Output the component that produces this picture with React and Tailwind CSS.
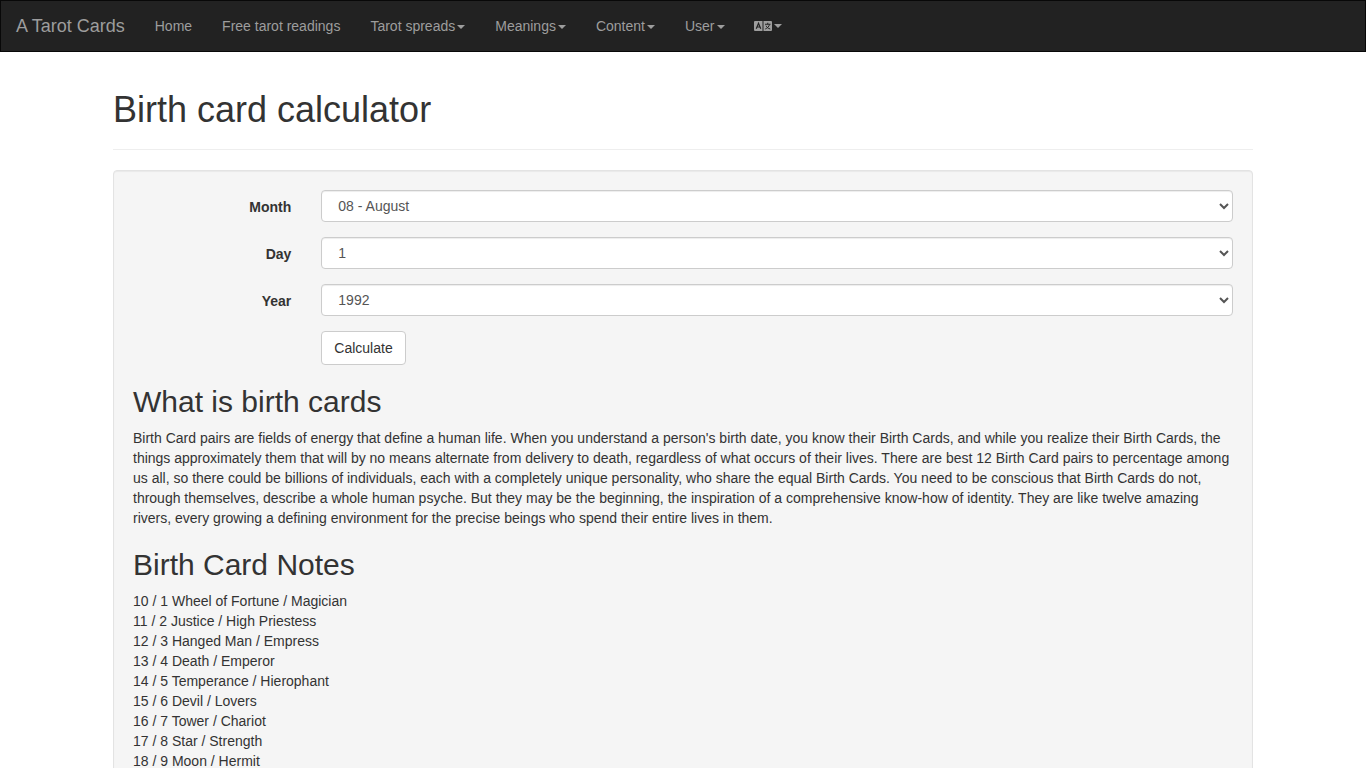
import React, { useState } from 'react';

const menu = [
  { label: 'Home' },
  { label: 'Free tarot readings' },
  { label: 'Tarot spreads', dropdown: true },
  { label: 'Meanings', dropdown: true },
  { label: 'Content', dropdown: true },
  { label: 'User', dropdown: true },
];

const months = [
  '01 - January', '02 - February', '03 - March', '04 - April', '05 - May', '06 - June',
  '07 - July', '08 - August', '09 - September', '10 - October', '11 - November', '12 - December',
];
const days = Array.from({ length: 31 }, (_, i) => String(i + 1));
const years = Array.from({ length: 100 }, (_, i) => String(1925 + i));

const notes = [
  '10 / 1 Wheel of Fortune / Magician',
  '11 / 2 Justice / High Priestess',
  '12 / 3 Hanged Man / Empress',
  '13 / 4 Death / Emperor',
  '14 / 5 Temperance / Hierophant',
  '15 / 6 Devil / Lovers',
  '16 / 7 Tower / Chariot',
  '17 / 8 Star / Strength',
  '18 / 9 Moon / Hermit',
];

function Caret() {
  return (
    <span className="ml-[2px] inline-block border-x-4 border-t-4 border-x-transparent border-t-[#9d9d9d] align-middle" />
  );
}

function LanguageIcon() {
  return (
    <svg viewBox="0 0 36 20" className="h-[10px] w-[18px]" fill="none" aria-hidden="true">
      <path d="M2 0h15v20H2a2 2 0 0 1-2-2V2a2 2 0 0 1 2-2zM19 0h15a2 2 0 0 1 2 2v16a2 2 0 0 1-2 2H19z" fill="#9d9d9d" />
      <path d="M4.500 15.500 9 4.500l4.500 11M6.500 12h5" stroke="#222" strokeWidth="2.400" />
      <path d="M22 6.500h11M27.500 3.500v3M31 7c-1 4-4 7-8.500 9M24 9.500c1.500 3 4.500 5.500 8.500 6.500" stroke="#222" strokeWidth="2" />
    </svg>
  );
}

function Navbar() {
  return (
    <nav className="flex flex-wrap border border-[#080808] bg-[#222] text-[#9d9d9d]">
      <a href="#" className="p-[15px] text-[18px] leading-[20px] hover:text-white">A Tarot Cards</a>
      <ul className="flex flex-wrap">
        {menu.map((item) => (
          <li key={item.label}>
            <a href="#" className="block p-[15px] hover:text-white">
              {item.label}
              {item.dropdown && <Caret />}
            </a>
          </li>
        ))}
        <li>
          <a href="#" aria-label="Language" className="flex items-center py-[15px] px-[14px] hover:text-white">
            <span className="flex h-5 items-center">
              <LanguageIcon />
              <Caret />
            </span>
          </a>
        </li>
      </ul>
    </nav>
  );
}

function SelectRow({ id, label, options, value, onChange }) {
  return (
    <div className="-mx-[15px] mb-[15px] grid grid-cols-6">
      <label htmlFor={id} className="px-[15px] pt-[7px] text-right font-bold">{label}</label>
      <div className="col-span-5 px-[15px]">
        <select
          id={id}
          value={value}
          onChange={(e) => onChange(e.target.value)}
          className="block h-8 w-full rounded-[4px] border border-[#ccc] bg-white pr-[13px] pl-3 text-[#555] shadow-[inset_0_1px_1px_rgba(0,0,0,0.075)]"
        >
          {options.map((o) => <option key={o}>{o}</option>)}
        </select>
      </div>
    </div>
  );
}

export default function App() {
  const [month, setMonth] = useState('08 - August');
  const [day, setDay] = useState('1');
  const [year, setYear] = useState('1992');

  return (
    <div className="bg-white font-['Liberation_Sans',Arial,sans-serif] text-[14px] leading-[20px] text-[#333]">
      <Navbar />
      <main className="mx-auto max-w-[1170px] px-[15px]">
        <header className="mt-[38px] mb-5 border-b border-[#eee] pb-[19px]">
          <h1 className="text-[36px] leading-[40px]">Birth card calculator</h1>
        </header>

        <div className="mb-5 rounded-[4px] border border-[#e3e3e3] bg-[#f5f5f5] p-[19px] shadow-[inset_0_1px_1px_rgba(0,0,0,0.05)]">
          <form onSubmit={(e) => e.preventDefault()}>
            <SelectRow id="month" label="Month" options={months} value={month} onChange={setMonth} />
            <SelectRow id="day" label="Day" options={days} value={day} onChange={setDay} />
            <SelectRow id="year" label="Year" options={years} value={year} onChange={setYear} />
            <div className="-mx-[15px] grid grid-cols-6">
              <div className="col-span-5 col-start-2 px-[15px]">
                <button type="submit" className="block rounded-[4px] border border-[#ccc] bg-white px-3 py-[6px] hover:bg-[#e6e6e6]">
                  Calculate
                </button>
              </div>
            </div>
          </form>

          <h2 className="mt-5 mb-[10px] text-[30px] leading-[33px]">What is birth cards</h2>
          <p className="mb-[10px]">
            Birth Card pairs are fields of energy that define a human life. When you understand a person's birth date,
            you know their Birth Cards, and while you realize their Birth Cards, the things approximately them that will
            by no means alternate from delivery to death, regardless of what occurs of their lives. There are best 12
            Birth Card pairs to percentage among us all, so there could be billions of individuals, each with a
            completely unique personality, who share the equal Birth Cards. You need to be conscious that Birth Cards do
            not, through themselves, describe a whole human psyche. But they may be the beginning, the inspiration of a
            comprehensive know-how of identity. They are like twelve amazing rivers, every growing a defining
            environment for the precise beings who spend their entire lives in them.
          </p>

          <h2 className="mt-5 mb-[10px] text-[30px] leading-[33px]">Birth Card Notes</h2>
          <ul>
            {notes.map((note) => <li key={note}>{note}</li>)}
          </ul>
        </div>
      </main>
    </div>
  );
}
